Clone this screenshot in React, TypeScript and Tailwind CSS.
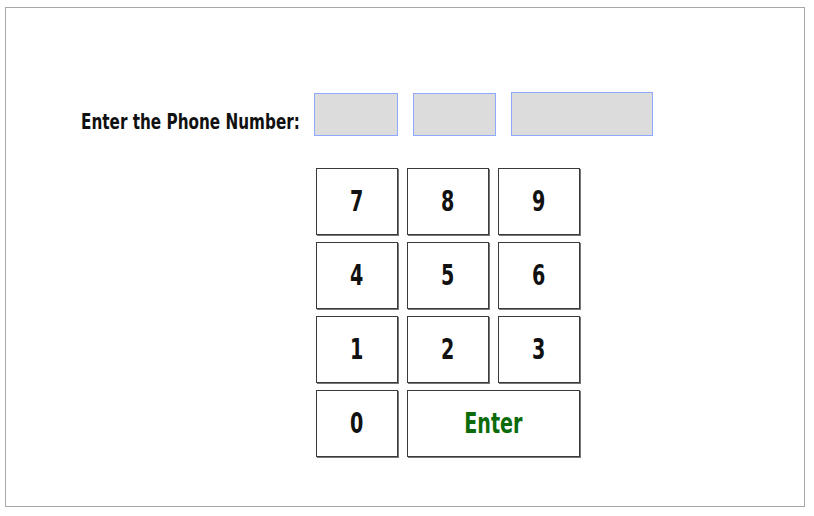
import React from "react";

const font = { fontFamily: '"DejaVu Sans Condensed", "DejaVu Sans", sans-serif' };

function Key({ label, wide = false, green = false }: { label: string; wide?: boolean; green?: boolean }) {
  return (
    <button
      className={`${wide ? "col-span-2" : ""} h-[67px] border border-[#3a3a3a] bg-white shadow-[1px_1px_0_#777] flex items-center justify-center`}
    >
      <span
        className={`inline-block scale-x-[0.76] font-bold leading-none text-[28px] ${green ? "text-[#0b6b0b]" : "text-[#111]"}`}
        style={font}
      >
        {label}
      </span>
    </button>
  );
}

export default function App() {
  return (
    <div className="w-[814px] h-[516px] bg-white pt-[7px] pl-[5px]">
      <div className="w-[800px] h-[500px] border border-[#a8a8a8] flex flex-col">
        <div className="flex items-center pl-[75px] pt-[84px]">
          <div className="w-[233px] whitespace-nowrap pt-[18px]">
            <span
              className="inline-block origin-left scale-x-[0.77] text-[22px] font-bold text-[#111] leading-none"
              style={font}
            >
              Enter the Phone Number:
            </span>
          </div>
          <div className="w-[84px] h-[43px] bg-[#dcdcdc] border border-[#8ca8ff]" />
          <div className="ml-[15px] w-[83px] h-[43px] bg-[#dcdcdc] border border-[#8ca8ff]" />
          <div className="ml-[15px] w-[142px] h-[44px] bg-[#dcdcdc] border border-[#8ca8ff]" />
        </div>
        <div className="ml-[310px] mt-[32px] grid grid-cols-[82px_82px_82px] gap-x-[9px] gap-y-[7px]">
          <Key label="7" />
          <Key label="8" />
          <Key label="9" />
          <Key label="4" />
          <Key label="5" />
          <Key label="6" />
          <Key label="1" />
          <Key label="2" />
          <Key label="3" />
          <Key label="0" />
          <Key label="Enter" wide green />
        </div>
      </div>
    </div>
  );
}
